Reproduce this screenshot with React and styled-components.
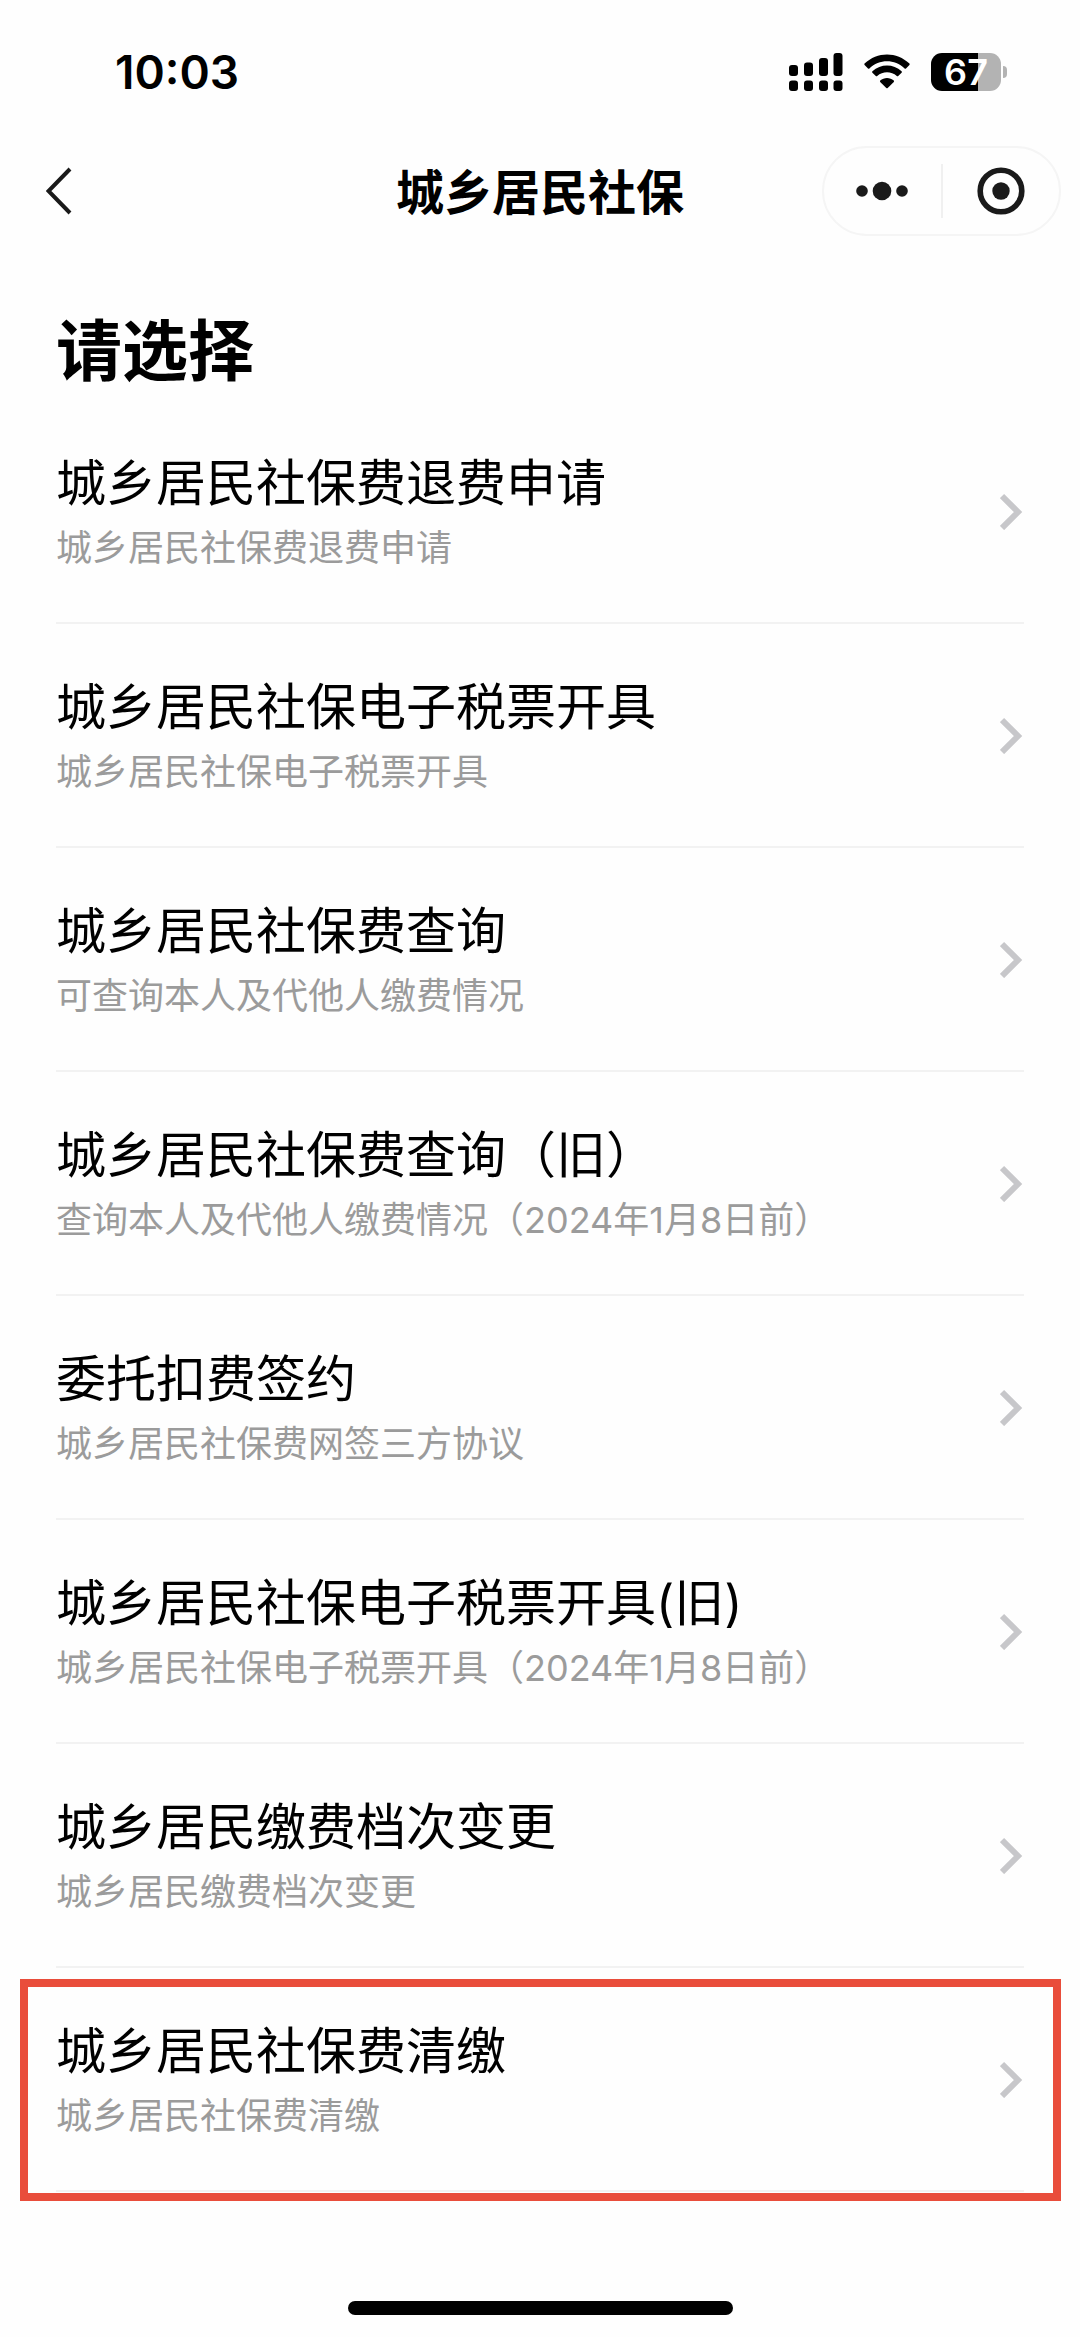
import React from 'react';
import styled, { createGlobalStyle } from 'styled-components';

const SERVICES = [
  { id: 1, title: '城乡居民社保费退费申请', desc: '城乡居民社保费退费申请' },
  { id: 2, title: '城乡居民社保电子税票开具', desc: '城乡居民社保电子税票开具' },
  { id: 3, title: '城乡居民社保费查询', desc: '可查询本人及代他人缴费情况' },
  {
    id: 4,
    title: '城乡居民社保费查询（旧）',
    desc: '查询本人及代他人缴费情况（2024年1月8日前）',
  },
  { id: 5, title: '委托扣费签约', desc: '城乡居民社保费网签三方协议' },
  {
    id: 6,
    title: '城乡居民社保电子税票开具(旧)',
    desc: '城乡居民社保电子税票开具（2024年1月8日前）',
  },
  { id: 7, title: '城乡居民缴费档次变更', desc: '城乡居民缴费档次变更' },
  {
    id: 8,
    title: '城乡居民社保费清缴',
    desc: '城乡居民社保费清缴',
    marked: true,
  },
];

function SignalIcon() {
  return (
    <svg width="54" height="38" viewBox="0 0 54 38" aria-hidden="true">
      <rect x="0" y="12" width="9" height="11" rx="3" />
      <rect x="15" y="9.5" width="9" height="13.5" rx="3" />
      <rect x="30" y="5" width="9" height="18" rx="3" />
      <rect x="44.5" y="0" width="9" height="23" rx="3" />
      <rect x="0" y="27.5" width="9" height="10.5" rx="3" />
      <rect x="15" y="27.5" width="9" height="10.5" rx="3" />
      <rect x="30" y="27.5" width="9" height="10.5" rx="3" />
      <rect x="44.5" y="27.5" width="9" height="10.5" rx="3" />
    </svg>
  );
}

function WifiIcon() {
  return (
    <svg width="46" height="36" viewBox="0 0 46 36" aria-hidden="true">
      <path d="M0.6 9.6 C13 -2.6 33 -2.6 45.4 9.6 Q46 10.3 45.4 11 L42 14.4 Q41.3 15 40.6 14.4 C30.8 4.8 15.2 4.8 5.4 14.4 Q4.7 15 4 14.4 L0.6 11 Q0 10.3 0.6 9.6Z" />
      <path d="M8.4 17.2 C16.6 9.6 29.4 9.6 37.6 17.2 Q38.3 18 37.6 18.7 L34.2 22 Q33.5 22.6 32.8 22 C27.2 17 18.8 17 13.2 22 Q12.5 22.6 11.8 22 L8.4 18.7 Q7.7 18 8.4 17.2Z" />
      <path d="M16.2 26.6 C20 23 26 23 29.8 26.6 Q30.3 27.3 29.8 27.9 L23.7 34 Q23 34.6 22.3 34 L16.2 27.9 Q15.7 27.3 16.2 26.6Z" />
    </svg>
  );
}

function App() {
  return (
    <>
      <GlobalStyle />
      <Page>
        <StatusBar>
          <Time>10:03</Time>
          <StatusIcons>
            <SignalIcon />
            <WifiIcon />
            <Battery>
              <BatteryBody>67</BatteryBody>
              <BatteryCap />
            </Battery>
          </StatusIcons>
        </StatusBar>

        <NavBar>
          <BackBtn type="button" aria-label="返回">
            <svg width="26" height="48" viewBox="0 0 26 48" fill="none">
              <path d="M24 2 L2.5 24 L24 46" stroke="#1a1a1a" strokeWidth="4" />
            </svg>
          </BackBtn>
          <NavTitle>城乡居民社保</NavTitle>
          <Capsule>
            <CapsuleBtn type="button" aria-label="更多">
              <svg width="52" height="20" viewBox="0 0 52 20" fill="#1a1a1a">
                <circle cx="6" cy="10" r="5.8" />
                <circle cx="26" cy="10" r="9.3" />
                <circle cx="46" cy="10" r="5.8" />
              </svg>
            </CapsuleBtn>
            <CapsuleLine />
            <CapsuleBtn type="button" aria-label="关闭">
              <svg width="48" height="48" viewBox="0 0 48 48">
                <circle
                  cx="24"
                  cy="24"
                  r="20.8"
                  fill="none"
                  stroke="#1a1a1a"
                  strokeWidth="5.6"
                />
                <circle cx="24" cy="24" r="8.7" fill="#1a1a1a" />
              </svg>
            </CapsuleBtn>
          </Capsule>
        </NavBar>

        <Content>
          <Heading>请选择</Heading>
          <List>
            {SERVICES.map(({ id, title, desc, marked }) => (
              <Item key={id} $marked={marked}>
                <ItemLink href={`#service-${id}`}>
                  <ItemText>
                    <ItemTitle>{title}</ItemTitle>
                    <ItemDesc>{desc}</ItemDesc>
                  </ItemText>
                  <svg width="24" height="38" viewBox="0 0 24 38" fill="none">
                    <path
                      d="M2 4 L18 20 L2 36"
                      stroke="#c7c7ca"
                      strokeWidth="6"
                    />
                  </svg>
                </ItemLink>
              </Item>
            ))}
          </List>
        </Content>

        <HomeIndicator />
      </Page>
    </>
  );
}

const GlobalStyle = createGlobalStyle`
  * {
    box-sizing: border-box;
  }

  body {
    margin: 0;
    background: #fefefe;
    color: #000;
    font-family: Inter, 'Noto Sans CJK SC', sans-serif;
  }

  button {
    padding: 0;
    border: none;
    background: none;
    cursor: pointer;
  }

  svg {
    display: block;
    flex-shrink: 0;
  }
`;

const Page = styled.div`
  display: flex;
  flex-direction: column;
  min-height: 100vh;
`;

const StatusBar = styled.div`
  display: flex;
  align-items: center;
  justify-content: space-between;
  height: 144px;
  padding: 0 73px 0 115px;
`;

const Time = styled.span`
  font-size: 46px;
  font-weight: 600;
  line-height: 56px;
`;

const StatusIcons = styled.div`
  display: flex;
  align-items: center;
  gap: 21px;
`;

const Battery = styled.div`
  display: flex;
  align-items: center;
  gap: 2px;
`;

const BatteryBody = styled.span`
  width: 70px;
  height: 38px;
  border-radius: 11px;
  background: linear-gradient(to right, #000 67%, #b3b3b3 67%);
  color: #fff;
  font-size: 36px;
  font-weight: 600;
  line-height: 38px;
  text-align: center;
`;

const BatteryCap = styled.span`
  width: 4px;
  height: 12px;
  border-radius: 0 6px 6px 0;
  background: #b3b3b3;
`;

const NavBar = styled.header`
  display: grid;
  grid-template-columns: 1fr auto 1fr;
  align-items: center;
  height: 94px;
  padding: 0 19px 0 46px;
`;

const BackBtn = styled.button`
  justify-self: start;
`;

const NavTitle = styled.h1`
  margin: 4px 27px 0 0;
  font-size: 48px;
  font-weight: 700;
  line-height: 64px;
`;

const Capsule = styled.div`
  display: flex;
  align-items: center;
  justify-self: end;
  width: 239px;
  height: 90px;
  border: 2px solid #f5f5f5;
  border-radius: 45px;
`;

const CapsuleBtn = styled.button`
  display: flex;
  flex: 1;
  align-items: center;
  justify-content: center;
  height: 100%;
`;

const CapsuleLine = styled.span`
  width: 2px;
  height: 54px;
  background: #f0f0f0;
`;

const Content = styled.main`
  padding: 68px 56px 0;
`;

const Heading = styled.h2`
  margin: 0 0 4px;
  font-size: 66px;
  font-weight: 700;
  line-height: 90px;
`;

const List = styled.ul`
  margin: 0;
  padding: 0;
  list-style: none;
`;

const Item = styled.li`
  position: relative;
  border-bottom: 2px solid #f2f2f2;

  &::after {
    content: '';
    display: ${props => (props.$marked ? 'block' : 'none')};
    position: absolute;
    inset: 11px -37px -11px -36px;
    border: 8px solid #e94d3b;
    pointer-events: none;
  }
`;

const ItemLink = styled.a`
  display: flex;
  align-items: center;
  justify-content: space-between;
  height: 222px;
  color: inherit;
  text-decoration: none;
`;

const ItemText = styled.div`
  display: flex;
  flex-direction: column;
  gap: 6px;
`;

const ItemTitle = styled.span`
  font-size: 50px;
  line-height: 68px;
`;

const ItemDesc = styled.span`
  color: #9b9b9b;
  font-size: 36px;
  line-height: 50px;
`;

const HomeIndicator = styled.div`
  width: 385px;
  height: 14px;
  margin: auto auto 22px;
  border-radius: 7px;
  background: #000;
`;

export default App;
